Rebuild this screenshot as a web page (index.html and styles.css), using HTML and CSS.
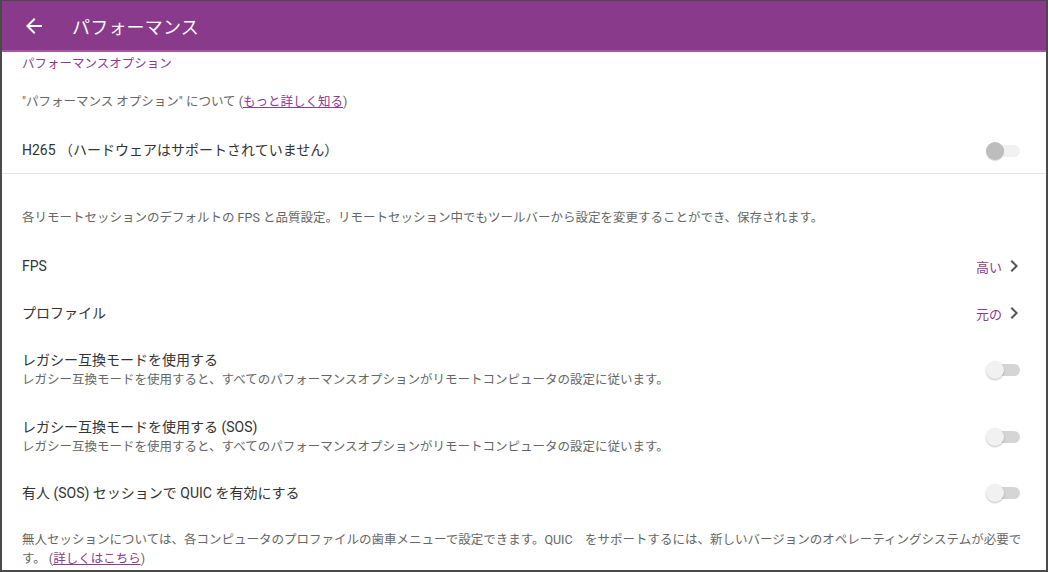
FILE: index.html
```html
<!DOCTYPE html>
<html lang="ja">
<head>
    <meta charset="UTF-8">
    <meta name="viewport" content="width=device-width, initial-scale=1.0">
    <title>パフォーマンス</title>
    <link rel="stylesheet" href="styles.css">
</head>
<body>
    <div class="screen">
        <div class="appbar">
            <svg class="back" width="24" height="24" viewBox="0 0 24 24">
                <path d="M20 11H7.83l5.59-5.59L12 4l-8 8 8 8 1.41-1.41L7.83 13H20v-2z" fill="#fff"/>
            </svg>
            <div class="appbar-title">パフォーマンス</div>
        </div>
        <div class="content">
            <div class="section-title">パフォーマンスオプション</div>
            <div class="about">"パフォーマンス オプション" について (<a href="#">もっと詳しく知る</a>)</div>

            <div class="row row-h265">
                <div class="label">H265 （ハードウェアはサポートされていません）</div>
                <div class="switch disabled"><span class="track"></span><span class="thumb"></span></div>
            </div>

            <div class="desc">各リモートセッションのデフォルトの FPS と品質設定。リモートセッション中でもツールバーから設定を変更することができ、保存されます。</div>

            <div class="row row-fps">
                <div class="label">FPS</div>
                <div class="value">高い
                    <svg class="chevron" width="8" height="12" viewBox="8 6 8 12"><path d="M10 6L8.59 7.41 13.17 12l-4.58 4.59L10 18l6-6z" fill="#555"/></svg>
                </div>
            </div>

            <div class="row row-profile">
                <div class="label">プロファイル</div>
                <div class="value">元の
                    <svg class="chevron" width="8" height="12" viewBox="8 6 8 12"><path d="M10 6L8.59 7.41 13.17 12l-4.58 4.59L10 18l6-6z" fill="#555"/></svg>
                </div>
            </div>

            <div class="row row-legacy">
                <div>
                    <div class="label">レガシー互換モードを使用する</div>
                    <div class="sub">レガシー互換モードを使用すると、すべてのパフォーマンスオプションがリモートコンピュータの設定に従います。</div>
                </div>
                <div class="switch"><span class="track"></span><span class="thumb"></span></div>
            </div>

            <div class="row row-legacy-sos">
                <div>
                    <div class="label">レガシー互換モードを使用する (SOS)</div>
                    <div class="sub">レガシー互換モードを使用すると、すべてのパフォーマンスオプションがリモートコンピュータの設定に従います。</div>
                </div>
                <div class="switch"><span class="track"></span><span class="thumb"></span></div>
            </div>

            <div class="row row-quic">
                <div class="label">有人 (SOS) セッションで QUIC を有効にする</div>
                <div class="switch"><span class="track"></span><span class="thumb"></span></div>
            </div>

            <div class="footer">無人セッションについては、各コンピュータのプロファイルの歯車メニューで設定できます。QUIC　をサポートするには、新しいバージョンのオペレーティングシステムが必要です。 (<a href="#">詳しくはこちら</a>)</div>
        </div>
    </div>
</body>
</html>
```

FILE: styles.css
```css
body {
    margin: 0;
    font-family: Roboto, 'Noto Sans CJK JP', sans-serif;
    background: #fff;
    color: #333;
}
.screen {
    box-sizing: border-box;
    width: 1048px;
    height: 572px;
    border: 2px solid #4a4a4a;
    border-top-width: 1px;
    overflow: hidden;
}
.appbar {
    height: 49px;
    background: #893a8b;
    border-bottom: 2px solid #a35aa4;
    display: flex;
    align-items: center;
    padding-left: 20px;
}
.appbar .back {
    margin-right: 26px;
}
.appbar-title {
    color: #fff;
    font-size: 18px;
    letter-spacing: 0.2px;
}
.content {
    padding: 0 16px 0 20px;
}
.section-title {
    height: 24px;
    line-height: 24px;
    font-size: 12.5px;
    color: #8e3a90;
}
.about {
    height: 52px;
    line-height: 52px;
    font-size: 12.5px;
    color: #666;
}
a {
    color: #8e3a90;
    text-decoration: underline;
}
.row {
    display: flex;
    align-items: center;
    justify-content: space-between;
}
.label {
    font-size: 14px;
    color: #333;
    line-height: 19px;
}
.sub {
    font-size: 12.5px;
    color: #666;
    line-height: 19px;
}
.row-h265 {
    height: 45px;
    border-bottom: 1px solid #e4e4e4;
    margin-right: -16px;
    padding-right: 16px;
    margin-left: -20px;
    padding-left: 20px;
}
.desc {
    font-size: 12.5px;
    color: #666;
    line-height: 20px;
    padding: 34px 0 14px;
}
.row-fps {
    height: 48px;
}
.row-profile {
    height: 46px;
}
.row-legacy {
    height: 68px;
}
.row-legacy-sos {
    height: 66px;
}
.row-quic {
    height: 46px;
}
.value {
    display: flex;
    align-items: center;
    font-size: 13px;
    color: #8e3a90;
    margin-right: 12px;
}
.chevron {
    margin-left: 8px;
}
.switch {
    position: relative;
    width: 34px;
    height: 20px;
    margin-right: 10px;
    flex-shrink: 0;
}
.switch .track {
    position: absolute;
    left: 2px;
    right: 0;
    top: 4px;
    height: 12px;
    border-radius: 6px;
    background: #d5d5d5;
}
.switch .thumb {
    position: absolute;
    left: 0;
    top: 1px;
    width: 18px;
    height: 18px;
    border-radius: 50%;
    background: #f1f1f1;
    box-shadow: 0 1px 2px rgba(0, 0, 0, 0.25);
}
.switch.disabled .track {
    background: #f1f1f1;
}
.switch.disabled .thumb {
    background: #bdbdbd;
    box-shadow: 0 1px 1px rgba(0, 0, 0, 0.15);
}
.footer {
    font-size: 12.5px;
    color: #666;
    line-height: 19px;
    padding-top: 14px;
}
```
